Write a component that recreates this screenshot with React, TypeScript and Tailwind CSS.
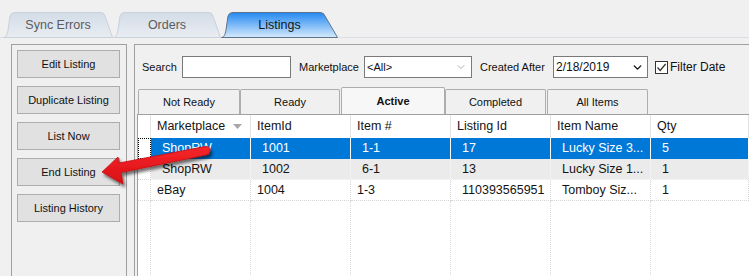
import { ChevronDown } from "lucide-react"

function TopTab({ label, width, active, id }: { label: string; width: number; active?: boolean; id: string }) {
    const w = width
    const d = `M0.5,25.5 C3,25.5 4,23 5,18 L7,4 Q8,0.5 12,0.5 L${w - (active ? 18 : 12)},0.5 Q${w - (active ? 14 : 9)},0.5 ${w - (active ? 13 : 8)},4 L${w - 0.5},25.5 Z`
    return (
        <div className="relative h-[26px] flex items-center justify-center shrink-0" style={{ width: w }}>
            <svg className="absolute inset-0" width={w} height={26}>
                <defs>
                    <linearGradient id={id} x1="0" y1="0" x2="0" y2="1">
                        {active ? (
                            <>
                                <stop offset="0" stopColor="#2489f2" />
                                <stop offset="1" stopColor="#d6eafc" />
                            </>
                        ) : (
                            <>
                                <stop offset="0" stopColor="#d3dce7" />
                                <stop offset="1" stopColor="#e9edf2" />
                            </>
                        )}
                    </linearGradient>
                </defs>
                <path d={d} fill={`url(#${id})`} stroke={active ? "#5f7286" : "#c9d1db"} />
            </svg>
            <span className={`relative text-[12.5px] mt-[1px] ${active ? "text-[#151515]" : "text-[#5c5c5c]"}`}>{label}</span>
        </div>
    )
}

function SideButton({ label }: { label: string }) {
    return (
        <button className="h-[28px] w-[103px] bg-[#e1e1e1] border border-[#adadad] text-[11px] text-[#111] flex items-center justify-center">
            {label}
        </button>
    )
}

function InnerTab({ label, w, active, ml }: { label: string; w: string; active?: boolean; ml?: string }) {
    return (
        <div
            className={`${w} ${ml ?? ""} ${active ? "h-[27px] font-bold bg-[#f7f7f7]" : "h-[25px] mt-[2px] bg-[#f0f0f0]"} border border-b-0 border-[#adadad] rounded-t-[2px] flex items-center justify-center text-[11px] text-[#111]`}
        >
            {label}
        </div>
    )
}

const cols = "grid grid-cols-[13px_100px_100px_100px_100px_100px_1fr]"

type Row = { cells: string[]; selected?: boolean; gray?: boolean; narrow?: boolean }

const rows: Row[] = [
    { cells: ["ShopRW", "1001", "1-1", "17", "Lucky Size 3...", "5"], selected: true },
    { cells: ["ShopRW", "1002", "6-1", "13", "Lucky Size 1...", "1"], gray: true },
    { cells: ["eBay", "1004", "1-3", "110393565951", "Tomboy Siz...", "1"], narrow: true },
]

export default function App() {
    return (
        <div className="relative w-[749px] h-[276px] overflow-hidden bg-[#f0f0f0] font-['Liberation_Sans',Arial,sans-serif]">
            {/* top tab strip */}
            <div className="h-[38px] pt-[12px] border-b border-[#dcdde5] flex">
                <div className="ml-[3px]">
                    <TopTab id="t1" label="Sync Errors" width={110} />
                </div>
                <TopTab id="t2" label="Orders" width={108} />
                <TopTab id="t3" label="Listings" width={117} active />
            </div>

            <div className="flex pt-[6px]">
                {/* left panel */}
                <div className="ml-[11px] w-[116px] h-[240px] border border-[#a0a0a0] flex flex-col gap-[8px] pl-[5px] pt-[5px] shrink-0">
                    <SideButton label="Edit Listing" />
                    <SideButton label="Duplicate Listing" />
                    <SideButton label="List Now" />
                    <SideButton label="End Listing" />
                    <SideButton label="Listing History" />
                </div>

                {/* right panel */}
                <div className="ml-[7px] flex-1 h-[240px] border-l border-t border-[#a0a0a0] flex flex-col">
                    <div className="mt-[11px] ml-[7px] h-[22px] flex items-center text-[11px] text-[#111]">
                        <span className="w-[40px]">Search</span>
                        <div className="w-[109px] h-[22px] bg-white border border-[#7a7a7a]" />
                        <span className="ml-[8px] w-[65px]">Marketplace</span>
                        <div className="w-[108px] h-[22px] bg-white border border-[#7a7a7a] flex items-center justify-between pl-[2px] pr-[4px]">
                            <span>&lt;All&gt;</span>
                            <ChevronDown size={12} strokeWidth={1.2} color="#7a7a7a" />
                        </div>
                        <span className="ml-[8px] w-[73px]">Created After</span>
                        <div className="w-[95px] h-[22px] bg-white border border-[#7a7a7a] flex items-center justify-between pl-[2px] pr-[3px]">
                            <span className="text-[12px]">2/18/2019</span>
                            <ChevronDown size={13} strokeWidth={2.6} color="#111" />
                        </div>
                        <div className="ml-[7px] w-[13px] h-[13px] border border-[#333] bg-white flex items-center justify-center">
                            <svg width="11" height="11" viewBox="0 0 11 11">
                                <path d="M1.5 5.5 L4.2 8.4 L9.6 2" fill="none" stroke="#333" strokeWidth="1.3" />
                            </svg>
                        </div>
                        <span className="ml-[2px] text-[12px]">Filter Date</span>
                    </div>

                    {/* inner tabs */}
                    <div className="mt-[9px] ml-[3px] flex items-start h-[27px]">
                        <InnerTab label="Not Ready" w="w-[102px]" />
                        <InnerTab label="Ready" w="w-[100px]" />
                        <InnerTab label="Active" w="w-[104px]" active ml="ml-[1px]" />
                        <InnerTab label="Completed" w="w-[101px]" />
                        <InnerTab label="All Items" w="w-[101px]" ml="ml-[1px]" />
                    </div>

                    {/* grid */}
                    <div className="ml-[2px] flex-1 border-l border-t border-[#a0a0a0] bg-white text-[12.5px] text-[#141414]">
                        <div className={`${cols} h-[23px]`}>
                            <div className="border-r border-[#e3e3e3]" />
                            {["Marketplace", "ItemId", "Item #", "Listing Id", "Item Name", "Qty"].map((h, i) => (
                                <div key={h} className="border-r border-[#e3e3e3] pl-[6px] pr-[8px] flex items-center justify-between">
                                    <span>{h}</span>
                                    {i === 0 && (
                                        <svg width="9" height="5" viewBox="0 0 9 5">
                                            <path d="M0 0 H9 L4.5 5 Z" fill="#a7a7a7" />
                                        </svg>
                                    )}
                                </div>
                            ))}
                        </div>
                        {rows.map((r, ri) => (
                            <div key={ri} className={`${cols} h-[21px]`}>
                                <div
                                    className={
                                        r.selected
                                            ? "border border-dotted border-black"
                                            : "border-r border-b border-dotted border-[#d6d6d6]"
                                    }
                                />
                                {r.cells.map((c, ci) => (
                                    <div
                                        key={ci}
                                        className={`flex items-center whitespace-nowrap overflow-hidden ${
                                            r.narrow && ci < 3 ? "pl-[6px]" : "pl-[11px]"
                                        } ${
                                            r.selected
                                                ? "bg-[#0078d7] text-white border-r border-white"
                                                : r.gray
                                                  ? "bg-[#ebebeb] border-r border-b border-dotted border-[#fafafa]"
                                                  : "border-r border-b border-dotted border-[#d6d6d6]"
                                        }`}
                                    >
                                        {c}
                                    </div>
                                ))}
                            </div>
                        ))}
                        <div className={`${cols} h-[80px]`}>
                            {Array.from({ length: 7 }).map((_, i) => (
                                <div key={i} className={i < 6 ? "border-r border-dotted border-[#dcdcdc]" : ""} />
                            ))}
                        </div>
                    </div>
                </div>
            </div>

            {/* red annotation arrow */}
            <svg className="absolute left-0 top-0 pointer-events-none" width="749" height="276">
                <defs>
                    <filter id="sh" x="-20%" y="-40%" width="140%" height="180%">
                        <feDropShadow dx="2" dy="3" stdDeviation="1.6" floodColor="#000" floodOpacity="0.55" />
                    </filter>
                    <linearGradient id="ar" x1="0" y1="0" x2="0" y2="1">
                        <stop offset="0" stopColor="#f6262a" />
                        <stop offset="1" stopColor="#d80f15" />
                    </linearGradient>
                </defs>
                <path
                    d="M102,172 L118,157 L119,163 L205,146.5 Q210,146 210,150.5 Q210,154.5 206,155 L121,172.5 L123,184 Z"
                    fill="url(#ar)"
                    stroke="#c50d12"
                    strokeWidth="0.8"
                    strokeLinejoin="round"
                    filter="url(#sh)"
                />
            </svg>
        </div>
    )
}
